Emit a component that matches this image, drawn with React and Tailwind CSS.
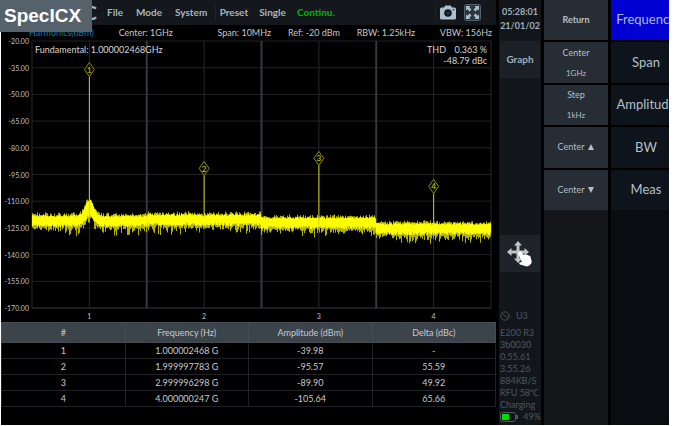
import { Ban } from "lucide-react";

const harmonics = [
  { id: 1, freq: "1.000002468 G", amp: -39.98, delta: "-" },
  { id: 2, freq: "1.999997783 G", amp: -95.57, delta: "55.59" },
  { id: 3, freq: "2.999996298 G", amp: -89.9, delta: "49.92" },
  { id: 4, freq: "4.000000247 G", amp: -105.64, delta: "65.66" },
];

const status = ["E200 R3", "3b0030", "0.55.61", "3.55.26", "884KB/S", "RFU 58℃", "Charging"];

// Plot area inside the chart, in svg units
const LEFT = 31;
const TOP = 2;
const WIDTH = 459;
const HEIGHT = 267;
const BAND = WIDTH / 4;

const levelToY = (dbm) => TOP + ((-20 - dbm) / 150) * HEIGHT;

function makeRandom(seed) {
  let s = seed;
  return () => {
    s = (s * 16807) % 2147483647;
    return s / 2147483647;
  };
}

// Noise floor, one vertical stroke per unit with a ragged edge behind it
function buildNoise() {
  const rand = makeRandom(4217);
  const tops = [176, 175, 178, 184];
  let core = "";
  let edge = "";

  for (let i = 0; i < WIDTH; i++) {
    const x = LEFT + i + 0.5;
    const band = Math.min(3, Math.floor((x - LEFT) / BAND));
    const d = x - (LEFT + BAND / 2);
    const hump = 16 * Math.exp(-(d * d) / 34);
    const top = tops[band] - hump + rand() * 2;
    const bottom = tops[band] + 9 - hump * 0.6 + rand() * 3;
    const long = rand() > 0.8 ? 3 + rand() * 6 : rand() * 4;
    core += `M${x} ${top.toFixed(1)}V${bottom.toFixed(1)}`;
    edge += `M${x} ${(top - rand() * 3).toFixed(1)}V${(bottom + 1 + long).toFixed(1)}`;
  }
  return { core, edge };
}

const noise = buildNoise();

function Chart() {
  const rows = Array.from({ length: 11 }, (_, i) => i);
  const cols = Array.from({ length: 9 }, (_, i) => i);

  return (
    <svg viewBox="0 0 495 283" className="block w-full overflow-visible" role="img" aria-label="Harmonics">
      {rows.map((i) => {
        const y = TOP + (i * HEIGHT) / 10;
        return (
          <g key={i}>
            <line x1={LEFT} x2={LEFT + WIDTH} y1={y} y2={y} stroke={i === 10 ? "#343a40" : "#202225"} />
            <text x="28" y={y + 3} textAnchor="end" fontSize="7" fill="#c0c2c4">
              {(-20 - i * 15).toFixed(2)}
            </text>
          </g>
        );
      })}
      {cols.map((i) => {
        const x = LEFT + (i * BAND) / 2;
        const divider = i === 2 || i === 4 || i === 6;
        return (
          <line
            key={i}
            x1={x}
            x2={x}
            y1={TOP}
            y2={TOP + HEIGHT}
            stroke={divider ? "#36383f" : "#25282b"}
            strokeWidth={divider ? 2 : 1}
          />
        );
      })}

      <path d={noise.edge} stroke="#b4b400" strokeWidth="1" />
      <path d={noise.core} stroke="#ffff00" strokeWidth="1.2" />

      {harmonics.map((h, i) => {
        const x = LEFT + BAND * (i + 0.5);
        const y = levelToY(h.amp);
        return (
          <g key={h.id}>
            <line x1={x} x2={x} y1={y} y2={i < 2 ? 178 : 186} stroke="#d2d200" />
            <path
              d={`M${x} ${y - 14}L${x + 5} ${y - 7}L${x} ${y}L${x - 5} ${y - 7}Z`}
              fill="#0a0a00"
              stroke="#8c8c00"
            />
            <text x={x} y={y - 4} textAnchor="middle" fontSize="8" fill="#d2d200">
              {h.id}
            </text>
            <text x={x} y="280" textAnchor="middle" fontSize="7" fill="#c0c2c4">
              {h.id}
            </text>
          </g>
        );
      })}

      <g fontSize="9" fill="#d4d6d8">
        <text x="34" y="14">Fundamental: 1.000002468GHz</text>
        <text x="426" y="14">THD</text>
        <text x="486" y="14" textAnchor="end">0.363 %</text>
        <text x="486" y="25" textAnchor="end">-48.79 dBc</text>
      </g>
    </svg>
  );
}

function CameraIcon() {
  return (
    <svg viewBox="0 0 16 15" className="h-[15px] w-4" aria-hidden="true">
      <path
        d="M1.5 2.5H4L5.2 .5h5.6L12 2.5h2.5A1.5 1.5 0 0 1 16 4v9a1.5 1.5 0 0 1-1.5 1.5h-13A1.5 1.5 0 0 1 0 13V4a1.5 1.5 0 0 1 1.5-1.5Z"
        fill="#abc0cc"
      />
      <circle cx="8" cy="8" r="3.8" fill="#14171b" />
      <circle cx="8" cy="8" r="1.5" fill="#2c363e" />
      <circle cx="13.5" cy="4.8" r="0.8" fill="#14171b" />
    </svg>
  );
}

function FullScreenIcon() {
  return (
    <svg viewBox="0 0 17 17" className="size-[17px]" aria-hidden="true">
      <rect x="0.5" y="0.5" width="16" height="16" rx="2" fill="#2c363d" stroke="#53616a" />
      <path
        d="M2 2h4.500L5.200 3.300 7.500 5.600 5.600 7.500 3.300 5.200 2 6.500ZM15 2v4.500L13.700 5.200 11.400 7.500 9.500 5.600 11.800 3.300 10.500 2ZM15 15h-4.500l1.300-1.300L9.500 11.400l1.900-1.900 2.300 2.300L15 10.500ZM2 15v-4.500l1.300 1.300 2.300-2.300 1.900 1.900-2.300 2.300L6.500 15Z"
        fill="#abc0cc"
      />
    </svg>
  );
}

function PanIcon() {
  return (
    <svg viewBox="0 0 26 26" className="size-[26px]" aria-hidden="true">
      <path
        d="M11 0l4 4.500h-2.500v5h5V7L22 11l-4.500 4V12.500h-5v5H15L11 22l-4-4.500h2.500v-5h-5V15L0 11l4.500-4v2.500h5v-5H7Z"
        fill="#c4c4c4"
      />
      <path
        d="M12.200 10.500c1.200-.6 2.100.2 2.700 1.100l1.700 2.300c1-.9 2-.7 2.600.1 1-.5 1.900-.1 2.300.7 1-.3 1.700.1 2 1l1 4c.4 1.700 0 2.800-.9 3.600l-1.300 1.300c-1.200.9-2.600 1-4.200.5l-5-1.700c-1.300-.6-1.200-2 .1-2.200l1.700-.2-3.600-8c-.4-1 .2-2.100.9-2.500Z"
        fill="#fff"
      />
    </svg>
  );
}

function SoftKey({ children }) {
  return (
    <button className="flex flex-col items-center justify-center gap-2 bg-[#262d34] text-[9px] leading-3 text-[#b4bfc7]">
      {children}
    </button>
  );
}

function MainKey({ active, children }) {
  return (
    <button
      className={`flex items-center justify-center text-[13px] whitespace-nowrap ${
        active ? "bg-[#0000d2] text-[#aebbe0]" : "bg-[#0e141b] text-[#b4c0c8]"
      }`}
    >
      {children}
    </button>
  );
}

export default function App() {
  return (
    <div className="relative bg-white pr-3 pb-px pl-px font-['Lato','Noto_Sans',sans-serif]">
      <div className="flex bg-black">
        {/* Measurement area */}
        <main className="min-w-0 flex-1 pb-[18px]">
          <nav className="flex h-[25px] items-center bg-[#14171b] pr-[15px] text-[10px] font-bold text-[#a3b5c1]">
            <span className="w-[106px] pl-[84px] text-[18px] leading-none">C</span>
            <div className="flex flex-1 items-center gap-[13px]">
              <button>File</button>
              <button>Mode</button>
              <button>System</button>
            </div>
            <div className="flex flex-2 items-center gap-[11px] border-l border-[#202429] pl-1">
              <button>Preset</button>
              <button>Single</button>
              <button className="text-[#00b400]">Continu.</button>
            </div>
            <div className="flex items-center gap-2 border-l border-[#202429] pl-1">
              <button aria-label="Screenshot">
                <CameraIcon />
              </button>
              <button aria-label="Full screen">
                <FullScreenIcon />
              </button>
            </div>
          </nav>

          <div className="flex h-[14px] items-end justify-between pr-1 pl-7 text-[9px] leading-3 whitespace-nowrap text-[#c4c6c8]">
            <span className="text-[#0a78b4]">Harmonics(dBm)</span>
            <span>Center: 1GHz</span>
            <span className="pl-5">Span: 10MHz</span>
            <span className="-ml-2">Ref: -20 dBm</span>
            <span className="-ml-2">RBW: 1.25kHz</span>
            <span>VBW: 156Hz</span>
          </div>

          <Chart />

          <table className="w-full table-fixed border-collapse text-center text-[9px] leading-3 text-[#c8cacc]">
            <thead>
              <tr className="h-5 bg-[#3c444b]">
                <th className="border border-[#444c53] font-normal">#</th>
                <th className="border border-[#444c53] font-normal">Frequency (Hz)</th>
                <th className="border border-[#444c53] font-normal">Amplitude (dBm)</th>
                <th className="border border-[#444c53] font-normal">Delta (dBc)</th>
              </tr>
            </thead>
            <tbody>
              {harmonics.map((h) => (
                <tr key={h.id} className="h-4">
                  <td className="border border-[#1e2226]">{h.id}</td>
                  <td className="border border-[#1e2226]">{h.freq}</td>
                  <td className="border border-[#1e2226]">{h.amp.toFixed(2)}</td>
                  <td className="border border-[#1e2226]">{h.delta}</td>
                </tr>
              ))}
            </tbody>
          </table>
        </main>

        {/* Clock, graph tools and device status */}
        <aside className="ml-[3px] flex w-[42px] flex-col bg-[#12161a]">
          <div className="h-[41px] pt-[5px] text-center text-[9px] leading-[14px] font-bold text-[#9fb0bb]">
            <div>05:28:01</div>
            <div>21/01/02</div>
          </div>
          <button className="mx-px h-[37px] bg-[#1b2026] text-[10px] font-bold text-[#9fb0bb]">Graph</button>
          <button
            aria-label="Pan"
            className="mx-px mt-[157px] flex h-[37px] items-center justify-center bg-[#1d2329]"
          >
            <PanIcon />
          </button>
          <div className="mt-auto pb-0.5 pl-px text-[9px] leading-3 whitespace-pre text-[#4c5760]">
            <div className="mb-[5px] flex items-center gap-[6px]">
              <Ban size={10} />
              U3
            </div>
            {status.map((line) => (
              <div key={line}>{line}</div>
            ))}
            <div className="flex items-center justify-between">
              <svg viewBox="0 0 18 10" className="h-[10px] w-[18px]" aria-hidden="true">
                <rect x="0.5" y="0.5" width="15" height="9" rx="2" fill="none" stroke="#4c5760" />
                <rect x="2" y="2" width="7" height="6" fill="#00dc00" />
                <path d="M17 3v4" stroke="#4c5760" strokeWidth="2" />
              </svg>
              49%
            </div>
          </div>
        </aside>

        {/* Soft keys */}
        <div className="ml-[3px] w-[64px] bg-[#141619]">
          <div className="grid h-[210px] grid-rows-5 gap-[2px] bg-black">
            <SoftKey>
              <span className="font-bold">Return</span>
            </SoftKey>
            <SoftKey>
              <span>Center</span>
              <span className="text-[8px]">1GHz</span>
            </SoftKey>
            <SoftKey>
              <span>Step</span>
              <span className="text-[8px]">1kHz</span>
            </SoftKey>
            <SoftKey>
              <span className="flex items-center gap-1">
                Center
                <svg viewBox="0 0 6 6" className="size-[6px]" aria-hidden="true">
                  <path d="M3 0L6 6H0Z" fill="currentColor" />
                </svg>
              </span>
            </SoftKey>
            <SoftKey>
              <span className="flex items-center gap-1">
                Center
                <svg viewBox="0 0 6 6" className="size-[6px]" aria-hidden="true">
                  <path d="M0 0H6L3 6Z" fill="currentColor" />
                </svg>
              </span>
            </SoftKey>
          </div>
        </div>

        {/* Main keys run past the right edge of the screen */}
        <div className="ml-[3px] w-[58px] overflow-hidden bg-[#090d11]">
          <div className="grid h-[210px] w-[70px] grid-rows-5 gap-[2px] bg-black">
            <MainKey active>Frequency</MainKey>
            <MainKey>Span</MainKey>
            <MainKey>Amplitude</MainKey>
            <MainKey>BW</MainKey>
            <MainKey>Meas</MainKey>
          </div>
        </div>
      </div>

      <h1 className="absolute top-0 left-0 flex h-8 w-[92px] items-center bg-[#56626b] pl-1 font-['Liberation_Sans',sans-serif] text-[19px] font-bold text-white">
        SpecICX
      </h1>
    </div>
  );
}
